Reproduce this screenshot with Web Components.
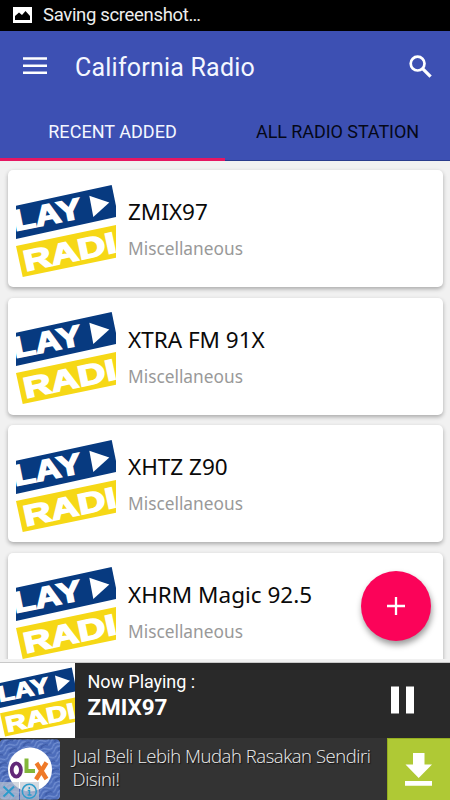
<!DOCTYPE html>
<html lang="en">
<head>
<meta charset="utf-8">
<title>California Radio</title>
<style>
html,body{margin:0;height:100%;overflow:hidden;background:#f1f1f1}
</style>
</head>
<body>
<radio-app></radio-app>
<script>
const define = (name, html, setup) => customElements.define(name, class extends HTMLElement {
  constructor() {
    super();
    const t = document.createElement('template');
    t.innerHTML = html;
    this.attachShadow({mode: 'open'}).appendChild(t.content.cloneNode(true));
  }
  connectedCallback() { if (setup) setup(this, this.shadowRoot); }
});

/* One line of text, tracked so that it takes the given width. */
define('fit-text', `<style>:host{display:block;white-space:nowrap}span{display:inline-block}</style><span><slot></slot></span>`, (el, root) => {
  const s = root.querySelector('span');
  const n = el.textContent.length;
  s.style.letterSpacing = '0px';
  s.style.letterSpacing = ((+el.getAttribute('width') - s.getBoundingClientRect().width) / n).toFixed(3) + 'px';
});

define('station-logo', `<style>:host{display:block;background:#fff;overflow:hidden}svg{display:block;width:100%;height:100%}
text{font:bold 29px "Liberation Sans",Arial,sans-serif;fill:#fff;stroke:#fff;stroke-width:1.5}</style>
<svg viewBox="0 0 100 100">
<path d="M0 26.7 95.7 6 100 27V38L0 60Z" fill="#073a80"/>
<path d="M0 67 100 46V78.7L6.7 98Z" fill="#f6d816"/>
<text transform="translate(-.8 52) rotate(-11.3)" textLength="69" lengthAdjust="spacingAndGlyphs">LAY</text>
<path d="M73.3 16.7 93.3 23.5 77.3 38Z" fill="#fff"/>
<text transform="translate(9.7 92.2) rotate(-12)" textLength="94" lengthAdjust="spacingAndGlyphs">RADI</text>
</svg>`);

define('status-bar', `<style>:host{display:flex;align-items:center;height:31px;box-sizing:border-box;background:#000;color:#eee;padding:0 13px 1px;gap:11px;font:18.5px/30px Roboto,sans-serif}
svg{width:19px;height:16px;flex:none}</style>
<svg viewBox="0 0 19 16"><path d="M0 0H19V16H0Z" fill="#fff"/><path d="M2 13V9L6 5.5 9 8 12.5 4 17 9V13Z" fill="#000"/></svg>
<fit-text width="157.5">Saving screenshot…</fit-text>`);

define('app-header', `<style>:host{display:block;height:130px;background:#3d50b3;color:#f4f7ff;font-family:Roboto,sans-serif}
.bar{display:flex;align-items:center;height:72px;padding:0 18px 0 23px;box-sizing:border-box}
.menu{width:24px;height:17px;margin:0 28px 3px 0;flex:none}
.find{width:23px;height:23px;margin:0 0 2px auto}
.bar fit-text{font-size:25px;line-height:72px;padding-top:1px}
.tabs{display:grid;grid-template-columns:1fr 1fr;height:58px;font-size:18px;line-height:58px}
.tabs div{display:flex;justify-content:center;box-sizing:border-box;height:58px}
.on{border-bottom:3.5px solid #e51662;}
.off{color:#050818;border-bottom:1px solid #2a3c8c}</style>
<div class="bar">
<svg class="menu" viewBox="0 0 24 17"><path d="M0 1.5H24M0 8.7H24M0 15.8H24" stroke="#fff" stroke-width="2.4"/></svg>
<fit-text width="180">California Radio</fit-text>
<svg class="find" viewBox="0 0 23 23" fill="none" stroke="#fff"><circle cx="8.6" cy="8.6" r="6.9" stroke-width="2.7"/><path d="M13.6 13.6 21.6 21.6" stroke-width="3.3"/></svg>
</div>
<div class="tabs"><div class="on"><fit-text width="128.5">RECENT ADDED</fit-text></div><div class="off"><fit-text width="163">ALL RADIO STATION</fit-text></div></div>`);

define('station-card', `<style>:host{display:flex;height:117px;box-sizing:border-box;background:#fff;border-radius:5px;box-shadow:0 2px 4px rgba(0,0,0,.3);padding:8.5px 8px;gap:12.5px;font-family:"Noto Sans",sans-serif;flex:none}
station-logo{width:100px;height:100px;flex:none}
.name{display:block;font-size:22.5px;line-height:32px;margin-top:17.8px;color:#0a0a0a}
.kind{display:block;font-size:17.3px;line-height:24px;margin-top:9px;color:#999}</style>
<station-logo></station-logo>
<div><div class="name"><slot></slot></div><div class="kind"><slot name="kind"></slot></div></div>`);

define('add-button', `<style>:host{display:grid;place-items:center;width:70px;height:70px;border-radius:50%;background:#fb0359;box-shadow:1px 4px 6px rgba(0,0,0,.4)}</style>
<svg width="18" height="18" viewBox="0 0 18 18"><path d="M9 0V18M0 9H18" stroke="#fff" stroke-width="2.3"/></svg>`);

define('now-playing', `<style>:host{display:flex;height:75px;background:#292929;color:#fff;font-family:Roboto,sans-serif;align-items:center;box-shadow:0 -1px 0 #c9c9c9;flex:none}
station-logo{width:75px;height:75px;flex:none}
.t{margin-left:12.5px;align-self:flex-start;padding-top:8px}
.a{font-size:18px;line-height:22px}.b{font-size:22.5px;line-height:27px;font-weight:700;margin-top:1px}
svg{margin:0 35px 2px auto}</style>
<station-logo></station-logo>
<div class="t"><fit-text class="a" width="107.5">Now Playing :</fit-text><fit-text class="b" width="80">ZMIX97</fit-text></div>
<svg width="25" height="28" viewBox="0 0 25 28"><path d="M1 .5H9V27.5H1ZM16 .5H24V27.5H16Z" fill="#fff"/></svg>`);

define('ad-banner', `<style>:host{display:flex;height:62px;background:#333;color:#eee;font:300 18.5px/22.5px "Open Sans",sans-serif;flex:none}
.brand{width:60px;height:62px;flex:none}
.copy{padding:7px 0 0 12.5px;flex:1;text-shadow:1px 1px 1px #111}
.get{width:63px;height:62px;background:#afc935;display:grid;place-items:center;box-shadow:inset 1px 1px #94ae20}</style>
<svg class="brand" viewBox="0 0 60 62">
<defs><pattern id="p" width="15" height="9" patternUnits="userSpaceOnUse" patternTransform="rotate(-24)"><path d="M0 2Q4-2 8 2T15 2M0 6Q4 2 8 6T15 6" fill="none" stroke="#7390d2" stroke-width="1.2"/><path d="M3 8Q7 4 11 8" fill="none" stroke="#3a58a4" stroke-width="1.2"/></pattern></defs>
<rect x="0" y="1.5" width="60" height="60" rx="4" fill="#4c6cba"/><rect x="0" y="1.5" width="60" height="60" rx="4" fill="url(#p)"/>
<circle cx="30" cy="31.5" r="22" fill="#fff"/>
<ellipse cx="16.3" cy="32" rx="4.6" ry="6.6" fill="none" stroke="#622878" stroke-width="3.8"/>
<path d="M26.5 20.5V33H35" fill="none" stroke="#83b73a" stroke-width="4"/>
<path d="M36.5 25 46.5 41M46.5 24.5 36 41.5" stroke="#ef7927" stroke-width="4.4"/>
<path d="M0 44H19V62H0ZM20 44H39V62H20Z" fill="#bfc7d2" opacity=".68"/>
<path d="M3.5 48.5 14 58.5M14 48.5 3.5 58.5" stroke="#2d9bcb" stroke-width="2"/>
<circle cx="29.3" cy="53.3" r="7" fill="none" stroke="#2d9bcb" stroke-width="1.5"/>
<path d="M29.3 49V51M27.7 52.5H29.5V57M27.5 57H31.5" fill="none" stroke="#2d9bcb" stroke-width="1.5"/>
</svg>
<div class="copy"><fit-text width="298">Jual Beli Lebih Mudah Rasakan Sendiri</fit-text><fit-text width="47">Disini!</fit-text></div>
<div class="get"><svg width="27" height="33" viewBox="0 0 27 33"><path d="M8 0H19.5V11.5H27L13.7 25 .5 11.5H8ZM0 28H27V32.7H0Z" fill="#fff"/></svg></div>`);

define('radio-app', `<style>:host{display:flex;flex-direction:column;width:450px;height:800px;position:relative;background:#f1f1f1;overflow:hidden}
status-bar,app-header{flex:none}
main{flex:1;min-height:0;overflow:hidden;margin-bottom:4px;padding:9px 7.5px 0;display:flex;flex-direction:column;gap:10.5px}
add-button{position:absolute;left:361px;top:571px}</style>
<status-bar></status-bar><app-header></app-header>
<main>
<station-card>ZMIX97<span slot="kind">Miscellaneous</span></station-card>
<station-card>XTRA FM 91X<span slot="kind">Miscellaneous</span></station-card>
<station-card>XHTZ Z90<span slot="kind">Miscellaneous</span></station-card>
<station-card>XHRM Magic 92.5<span slot="kind">Miscellaneous</span></station-card>
</main>
<now-playing></now-playing><ad-banner></ad-banner>
<add-button></add-button>`);
</script>
</body>
</html>
